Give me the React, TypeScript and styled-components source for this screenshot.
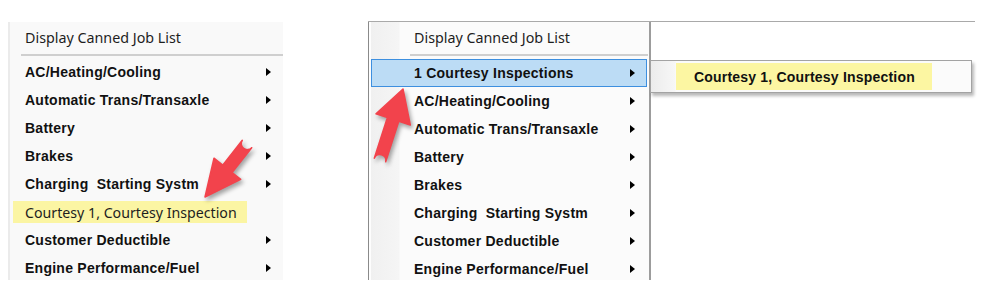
import React from "react";
import styled, { createGlobalStyle } from "styled-components";

const GlobalStyle = createGlobalStyle`
  html, body {
    margin: 0;
    padding: 0;
    background: #ffffff;
  }
`;

const Page = styled.div`
  position: relative;
  width: 993px;
  height: 292px;
  display: flex;
  align-items: flex-start;
  overflow: hidden;
  background: #ffffff;
`;

const LeftPanel = styled.div`
  margin: 22px 0 0 8px;
  width: 273px;
  height: 258px;
  background: #f9f9f9;
  border-left: 2px solid #ebebeb;
  display: flex;
  flex-direction: column;
  overflow: hidden;

  & > * {
    flex-shrink: 0;
  }
`;

const HeaderItem = styled.div<{ indent: number }>`
  height: 30px;
  display: flex;
  align-items: center;
  padding-left: ${(p) => p.indent}px;
  font-family: "Noto Sans", "Open Sans", sans-serif;
  font-size: 14.3px;
  color: #1e1e1e;
`;

const Separator = styled.div<{ indent: number; right: number }>`
  height: 2px;
  margin: 2px ${(p) => p.right}px 2px ${(p) => p.indent}px;
  background: #cfcfcf;
`;

const Row = styled.div<{ indent: number; right: number }>`
  height: 28px;
  display: flex;
  align-items: center;
  justify-content: space-between;
  padding: 0 ${(p) => p.right}px 0 ${(p) => p.indent}px;
  font-family: "Liberation Sans", Arial, sans-serif;
  font-weight: bold;
  font-size: 14px;
  letter-spacing: 0.25px;
  color: #111111;
  white-space: pre;
`;

const Caret = styled.span`
  width: 0;
  height: 0;
  border-top: 4px solid transparent;
  border-bottom: 4px solid transparent;
  border-left: 5px solid #000000;
`;

const YellowRow = styled.div`
  height: 22px;
  margin: 3px 0 3px 3px;
  width: 222px;
  padding-left: 12px;
  display: flex;
  align-items: center;
  background: #fbf5a3;
  font-family: "Noto Sans", "Open Sans", sans-serif;
  font-size: 14.2px;
  color: #1e1e1e;
`;

const RightArea = styled.div`
  margin: 21px 0 0 85px;
  width: 607px;
  border-top: 1px solid #a9a9a9;
  display: flex;
  align-items: flex-start;
`;

const Menu = styled.div`
  width: 280px;
  height: 258px;
  border-left: 1px solid #8a8a8a;
  border-right: 2px solid #9c9c9c;
  background: linear-gradient(
    to right,
    #fdfdfd 0 2px,
    #f0f0f0 2px,
    #f5f5f5 30px,
    #fbfbfb 31px
  );
  display: flex;
  flex-direction: column;
  overflow: hidden;

  & > * {
    flex-shrink: 0;
  }
`;

const BlueRow = styled(Row)`
  box-sizing: border-box;
  margin: 1px 2px 0 2px;
  height: 28px;
  background: #bcdcf5;
  border: 1px solid #3d8fdf;
`;

const SubMenu = styled.div`
  margin: 38px 0 0 -1px;
  width: 320px;
  height: 31px;
  border: 1px solid #a3a3a3;
  background: linear-gradient(to right, #ececec 0, #f7f7f7 24px, #fbfbfb 25px);
  box-shadow: 2px 3px 3px rgba(0, 0, 0, 0.28);
  display: flex;
  align-items: center;
`;

const SubItem = styled.div`
  margin-left: 25px;
  width: 238px;
  height: 27px;
  padding-left: 18px;
  display: flex;
  align-items: center;
  background: #fcf6a2;
  font-family: "Liberation Sans", Arial, sans-serif;
  font-weight: bold;
  font-size: 14px;
  letter-spacing: 0.2px;
  color: #111111;
`;

const Overlay = styled.svg`
  position: absolute;
  left: 0;
  top: 0;
  width: 993px;
  height: 292px;
  pointer-events: none;
  filter: drop-shadow(2px 3px 2px rgba(0, 0, 0, 0.35));
`;

const categories = [
  "AC/Heating/Cooling",
  "Automatic Trans/Transaxle",
  "Battery",
  "Brakes",
  "Charging  Starting Systm",
];

const after = ["Customer Deductible", "Engine Performance/Fuel"];

function arrowPath(
  tx: number,
  ty: number,
  px: number,
  py: number,
  shaft: number,
  headLen: number,
  headHalf: number
) {
  const dx = px - tx;
  const dy = py - ty;
  const len = Math.hypot(dx, dy);
  const ux = dx / len;
  const uy = dy / len;
  const nx = -uy;
  const ny = ux;
  const bx = px - ux * headLen;
  const by = py - uy * headLen;
  const pt = (x: number, y: number) => `${x.toFixed(1)} ${y.toFixed(1)}`;
  return [
    `M ${pt(tx + nx * shaft, ty + ny * shaft)}`,
    `L ${pt(bx + nx * shaft, by + ny * shaft)}`,
    `L ${pt(bx + nx * headHalf, by + ny * headHalf)}`,
    `L ${pt(px, py)}`,
    `L ${pt(bx - nx * headHalf, by - ny * headHalf)}`,
    `L ${pt(bx - nx * shaft, by - ny * shaft)}`,
    `L ${pt(tx - nx * shaft, ty - ny * shaft)}`,
    `A ${shaft} ${shaft} 0 0 1 ${pt(tx + nx * shaft, ty + ny * shaft)}`,
    "Z",
  ].join(" ");
}

export default function App() {
  return (
    <>
      <GlobalStyle />
      <Page>
        <LeftPanel>
          <HeaderItem indent={15}>Display Canned Job List</HeaderItem>
          <Separator indent={11} right={0} />
          {categories.map((c) => (
            <Row key={c} indent={15} right={12}>
              {c}
              <Caret />
            </Row>
          ))}
          <YellowRow>Courtesy 1, Courtesy Inspection</YellowRow>
          {after.map((c) => (
            <Row key={c} indent={15} right={12}>
              {c}
              <Caret />
            </Row>
          ))}
        </LeftPanel>

        <RightArea>
          <Menu>
            <HeaderItem indent={45}>Display Canned Job List</HeaderItem>
            <Separator indent={41} right={1} />
            <BlueRow indent={42} right={11}>
              1 Courtesy Inspections
              <Caret />
            </BlueRow>
            {[...categories, ...after].map((c) => (
              <Row key={c} indent={45} right={14}>
                {c}
                <Caret />
              </Row>
            ))}
          </Menu>
          <SubMenu>
            <SubItem>Courtesy 1, Courtesy Inspection</SubItem>
          </SubMenu>
        </RightArea>

        <Overlay viewBox="0 0 993 292">
          <path
            d={arrowPath(247, 144, 205, 197, 6, 36, 17)}
            fill="#f2434c"
            stroke="#f2434c"
            strokeWidth={1.5}
            strokeLinejoin="round"
          />
          <path
            d={arrowPath(380, 160, 403, 89, 6, 32, 18)}
            fill="#f2434c"
            stroke="#f2434c"
            strokeWidth={1.5}
            strokeLinejoin="round"
          />
        </Overlay>
      </Page>
    </>
  );
}
